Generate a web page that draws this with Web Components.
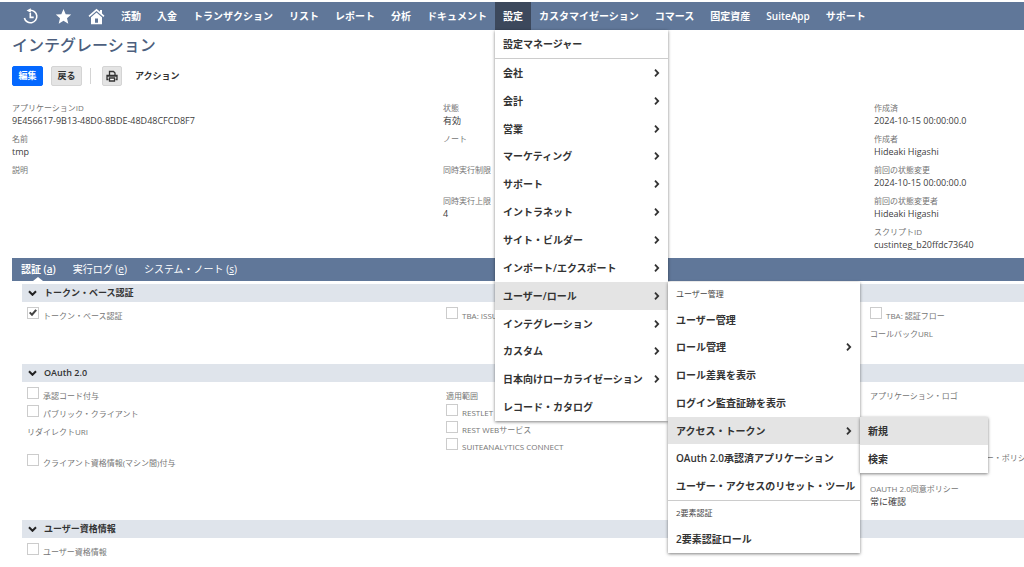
<!DOCTYPE html>
<html lang="ja">
<head>
<meta charset="utf-8">
<meta name="viewport" content="width=device-width, initial-scale=1">
<title>インテグレーション</title>
<style>
  body {
    margin: 0;
    background: #fff;
    color: #404040;
    font-family: "Open Sans", "Noto Sans CJK JP", sans-serif;
    font-size: 9px;
    overflow-x: hidden;
  }
</style>
</head>
<body>
<integration-page></integration-page>

<script>
  const define = (name, html) => {
    const template = document.createElement('template');
    template.innerHTML = html;
    customElements.define(name, class extends HTMLElement {
      constructor() {
        super();
        this.attachShadow({ mode: 'open' }).append(template.content.cloneNode(true));
      }
      connectedCallback() {
        for (const el of this.shadowRoot.querySelectorAll('[data-text]')) {
          el.textContent = this.getAttribute(el.dataset.text) || '';
        }
        const box = this.shadowRoot.querySelector('input[type=checkbox]');
        if (box) box.checked = this.hasAttribute('checked');
      }
    });
  };

  /* Top navigation */
  define('nav-bar', `
    <style>
      :host { display: block; background: #607799; color: #fff; }
      nav { display: flex; height: 28px; padding-left: 14px; }
    </style>
    <nav aria-label="メイン"><slot></slot></nav>`);

  define('nav-link', `
    <style>
      :host { display: block; position: relative; flex: none; }
      a { display: flex; align-items: center; height: 100%; padding: 0 8px; color: #fff;
          font-size: 10px; font-weight: 600; line-height: 14px; text-decoration: none; white-space: nowrap; }
      :host([icon]) a { width: 17px; justify-content: center; }
      :host([active]) a { background: #3c485c; }
      ::slotted(menu-panel) { left: 0; top: 100%; }
    </style>
    <a href="#"><slot></slot></a><slot name="menu"></slot>`);

  /* Drop-down menus */
  define('menu-panel', `
    <style>
      :host { display: flex; flex-direction: column; position: absolute; z-index: 2;
              width: var(--panel-width); height: var(--panel-height);
              background: #fff; color: #333; box-shadow: 0 1px 3px rgba(0,0,0,.5); }
    </style>
    <slot></slot>`);

  define('menu-entry', `
    <style>
      :host { display: block; position: relative; flex: 1; }
      a { display: flex; align-items: center; justify-content: space-between; height: 100%;
          padding: 0 8px; color: #333; font-size: 10px; font-weight: 600; line-height: 14px;
          text-decoration: none; white-space: nowrap; }
      :host([current]) a { background: #e4e4e4; }
      svg { display: none; width: 6px; height: 8px; fill: none; stroke: #333; stroke-width: 1.8; }
      :host([more]) svg { display: block; }
      ::slotted(menu-panel) { left: 100%; top: 0; }
    </style>
    <a href="#"><span><slot></slot></span><svg viewBox="0 0 6 8" aria-hidden="true"><path d="M1 .7 4.2 4 1 7.3"/></svg></a>
    <slot name="menu"></slot>`);

  define('menu-heading', `
    <style>
      :host { display: block; flex: none; padding: 0 8px; color: #444; font-size: 8px; line-height: 24px; white-space: nowrap; }
    </style>
    <slot></slot>`);

  define('menu-divider', `<style>:host { display: block; flex: none; height: 1px; background: #ccc; }</style>`);

  /* Buttons */
  define('tool-button', `
    <style>
      :host { display: block; }
      button { display: flex; align-items: center; justify-content: center; height: 20px; width: 31px;
               padding: 0; border: 1px solid #d4d4d4; border-radius: 2px; background: #e4e4e4; color: #333;
               font: 600 9px/14px "Open Sans", "Noto Sans CJK JP", sans-serif; white-space: nowrap; }
      :host([primary]) button { background: #0468ff; border-color: #0468ff; color: #fff; }
      :host([square]) button { width: 20px; }
      :host([plain]) button { width: auto; padding: 0 4px; background: none; border-color: transparent; }
    </style>
    <button type="button"><slot></slot></button>`);

  /* Read-only field */
  define('data-field', `
    <style>
      :host { display: block; height: 26px; margin-bottom: 5px; white-space: nowrap; }
      dl, dd { margin: 0; }
      dt, dd { height: 13px; line-height: 13px; }
      dt { color: #757575; font-size: 8px; }
      dd { color: #404040; font-size: 9px; }
    </style>
    <dl><dt data-text="label"></dt><dd><slot></slot></dd></dl>`);

  define('check-field', `
    <style>
      :host { display: block; height: var(--line, 18px); }
      label { display: flex; align-items: flex-start; gap: 4px; color: #757575; font-size: 8px;
              line-height: var(--line, 18px); white-space: nowrap; }
      input { appearance: none; flex: none; display: grid; place-items: center; box-sizing: border-box; width: 12px; height: 12px;
              margin: 0; border: 1px solid #ccc; background: #fff; }
      input:checked::before { content: ""; width: 8px; height: 8px; background: #444;
        clip-path: polygon(0 50%, 18% 34%, 36% 54%, 80% 4%, 100% 20%, 38% 92%); }
    </style>
    <label><input type="checkbox"><span><slot></slot></span></label>`);

  define('plain-label', `
    <style>:host { display: block; height: var(--space, 18px); color: #757575; font-size: 8px; line-height: var(--line, 18px); white-space: nowrap; }</style>
    <slot></slot>`);

  /* Tabs and sections */
  define('tab-bar', `
    <style>
      :host { display: block; background: #607799; }
      nav { display: flex; gap: 17px; height: 23px; padding-left: 9px; }
    </style>
    <nav aria-label="タブ"><slot></slot></nav>`);

  define('tab-link', `
    <style>
      :host { display: block; position: relative; }
      a { color: #fff; font-size: 10px; line-height: 23px; text-decoration: none; white-space: nowrap; }
      span { text-decoration: underline; }
      :host([active]) a { font-weight: 600; }
      :host([active])::after { content: ""; position: absolute; left: calc(50% - 5px); bottom: 0;
        border: 5px solid transparent; border-top: 0; border-bottom: 4px solid #fff; }
    </style>
    <a href="#"><slot></slot> (<span data-text="key"></span>)</a>`);

  define('page-section', `
    <style>
      :host { display: block; }
      h2 { display: flex; align-items: center; gap: 7px; height: 18px; margin: 0; padding-left: 6px;
           background: #dfe4eb; color: #333; font-size: 9px; font-weight: 600; line-height: 18px; }
      svg { width: 9px; height: 6px; fill: none; stroke: #222; stroke-width: 2; }
      .body { display: grid; grid-template-columns: minmax(0, 419fr) minmax(0, 424fr) minmax(0, 154fr);
              box-sizing: border-box; min-height: var(--body-height); padding: 5px 0 0 5px; }
    </style>
    <h2><svg viewBox="0 0 9 6" aria-hidden="true"><path d="M1 1.2q3.5 3.6 3.5 3.6T8 1.2"/></svg><span data-text="heading"></span></h2>
    <div class="body"><slot></slot></div>`);

  define('integration-page', `
    <style>
      :host { display: block; padding-top: 2px; }
      main { padding-left: 12px; }
      h1 { margin: 3px 0 9px; color: #4d5f7e; font-size: 16px; font-weight: 500; line-height: 24px; }
      .tools { display: flex; align-items: center; gap: 8px; }
      .tools i { width: 1px; height: 16px; margin-right: 3px; background: #d4d4d4; }
      .fields { display: grid; grid-template-columns: minmax(0, 431fr) minmax(0, 431fr) minmax(0, 150fr);
                min-height: 157px; margin-top: 15px; }
      .sections { padding: 3px 0 0 10px; }
      .tight { --line: 17px; --space: 17px; }
      .low { padding-top: 2px; }
      .wide { --space: 31px; }
      .s1 { --body-height: 62px; }
      .s2 { --body-height: 138px; }
      .m1 { --panel-width: 173px; --panel-height: 391px; }
      .m2 { --panel-width: 192px; --panel-height: 271px; }
      .m3 { --panel-width: 128px; --panel-height: 56px; }
      svg { display: block; flex: none; }
    </style>
    <nav-bar>
      <nav-link icon aria-label="履歴"><svg width="17" height="17" viewBox="0 0 17 17" fill="none" stroke="#fff" stroke-width="1.6"><path d="M8 2.2A6.3 6.3 0 1 1 2.4 10M8.3 5v4.400h3.400"/><path d="M4.600 2.600 8.800.2v4.600z" fill="#fff" stroke="none"/></svg></nav-link>
      <nav-link icon aria-label="ショートカット"><svg width="17" height="17" viewBox="0 0 17 17" fill="#fff"><path d="m8.500 1 2.200 5.200 5.500.4-4.200 3.600 1.300 5.500-4.800-2.900-4.800 2.900 1.300-5.500L.8 6.600l5.500-.4z"/></svg></nav-link>
      <nav-link icon aria-label="ホーム"><svg width="17" height="17" viewBox="0 0 17 17" fill="#fff"><path d="M8.500.8.500 7.800l1.100 1.200 6.900-6 6.900 6 1.100-1.200-2.500-2.200V2h-2v1.800z"/><path fill-rule="evenodd" d="m8.500 4.500-5.500 4.800v6.900h11V9.300zM7 10.500h3v4.200H7z"/></svg></nav-link>
      <nav-link>活動</nav-link><nav-link>入金</nav-link><nav-link>トランザクション</nav-link><nav-link>リスト</nav-link><nav-link>レポート</nav-link><nav-link>分析</nav-link><nav-link>ドキュメント</nav-link>
      <nav-link active>設定<menu-panel slot="menu" class="m1">
          <menu-entry>設定マネージャー</menu-entry>
          <menu-divider></menu-divider>
          <menu-entry more>会社</menu-entry>
          <menu-entry more>会計</menu-entry>
          <menu-entry more>営業</menu-entry>
          <menu-entry more>マーケティング</menu-entry>
          <menu-entry more>サポート</menu-entry>
          <menu-entry more>イントラネット</menu-entry>
          <menu-entry more>サイト・ビルダー</menu-entry>
          <menu-entry more>インポート/エクスポート</menu-entry>
          <menu-entry more current>ユーザー/ロール<menu-panel slot="menu" class="m2">
              <menu-heading>ユーザー管理</menu-heading>
              <menu-entry>ユーザー管理</menu-entry>
              <menu-entry more>ロール管理</menu-entry>
              <menu-entry>ロール差異を表示</menu-entry>
              <menu-entry>ログイン監査証跡を表示</menu-entry>
              <menu-entry more current>アクセス・トークン<menu-panel slot="menu" class="m3">
                  <menu-entry current>新規</menu-entry>
                  <menu-entry>検索</menu-entry>
                </menu-panel></menu-entry>
              <menu-entry>OAuth 2.0承認済アプリケーション</menu-entry>
              <menu-entry>ユーザー・アクセスのリセット・ツール</menu-entry>
              <menu-divider></menu-divider>
              <menu-heading>2要素認証</menu-heading>
              <menu-entry>2要素認証ロール</menu-entry>
            </menu-panel></menu-entry>
          <menu-entry more>インテグレーション</menu-entry>
          <menu-entry more>カスタム</menu-entry>
          <menu-entry more>日本向けローカライゼーション</menu-entry>
          <menu-entry>レコード・カタログ</menu-entry>
        </menu-panel></nav-link>
      <nav-link>カスタマイゼーション</nav-link><nav-link>コマース</nav-link><nav-link>固定資産</nav-link><nav-link>SuiteApp</nav-link><nav-link>サポート</nav-link>
    </nav-bar>
    <main>
      <h1>インテグレーション</h1>
      <div class="tools">
        <tool-button primary>編集</tool-button>
        <tool-button>戻る</tool-button>
        <i></i>
        <tool-button square aria-label="印刷"><svg width="12" height="12" viewBox="0 0 12 12" fill="none" stroke="#333" stroke-width="1.300"><path d="M3.500 5V1.500h4l1.500 1.500v2M2.500 9.500h-1.500v-4h10v4h-1.500"/><path d="M1 6h10"/><path d="M3.500 8h5v3h-5z" fill="#fff"/></svg></tool-button>
        <tool-button plain>アクション</tool-button>
      </div>
      <div class="fields">
        <div>
          <data-field label="アプリケーションID">9E456617-9B13-48D0-8BDE-48D48CFCD8F7</data-field>
          <data-field label="名前">tmp</data-field>
          <data-field label="説明"></data-field>
        </div>
        <div>
          <data-field label="状態">有効</data-field>
          <data-field label="ノート"></data-field>
          <data-field label="同時実行制限"></data-field>
          <data-field label="同時実行上限">4</data-field>
        </div>
        <div>
          <data-field label="作成済">2024-10-15 00:00:00.0</data-field>
          <data-field label="作成者">Hideaki Higashi</data-field>
          <data-field label="前回の状態変更">2024-10-15 00:00:00.0</data-field>
          <data-field label="前回の状態変更者">Hideaki Higashi</data-field>
          <data-field label="スクリプトID">custinteg_b20ffdc73640</data-field>
        </div>
      </div>
      <tab-bar>
        <tab-link active key="a">認証</tab-link>
        <tab-link key="e">実行ログ</tab-link>
        <tab-link key="s">システム・ノート</tab-link>
      </tab-bar>
      <div class="sections">
        <page-section class="s1" heading="トークン・ベース認証">
          <div><check-field checked>トークン・ベース認証</check-field></div>
          <div><check-field>TBA: ISSUETOKEN</check-field></div>
          <div><check-field>TBA: 認証フロー</check-field><plain-label>コールバックURL</plain-label></div>
        </page-section>
        <page-section class="s2" heading="OAuth 2.0">
          <div>
            <check-field>承認コード付与</check-field>
            <check-field>パブリック・クライアント</check-field>
            <plain-label class="wide">リダイレクトURI</plain-label>
            <check-field>クライアント資格情報(マシン間)付与</check-field>
          </div>
          <div class="tight">
            <plain-label>適用範囲</plain-label>
            <check-field>RESTLET</check-field>
            <check-field>REST WEBサービス</check-field>
            <check-field>SUITEANALYTICS CONNECT</check-field>
          </div>
          <div class="low">
            <data-field label="アプリケーション・ロゴ"></data-field>
            <data-field></data-field>
            <data-field label="アプリケーション ・ プライバシー・ポリシー"></data-field>
            <data-field label="OAUTH 2.0同意ポリシー">常に確認</data-field>
          </div>
        </page-section>
        <page-section heading="ユーザー資格情報">
          <div><check-field>ユーザー資格情報</check-field></div>
        </page-section>
      </div>
    </main>`);
</script>
</body>
</html>
